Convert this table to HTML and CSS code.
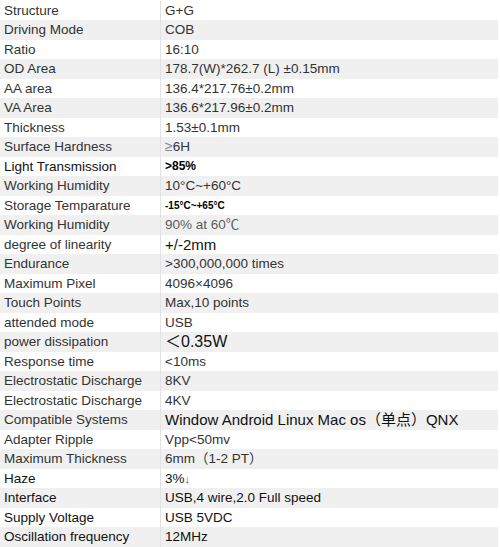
FILE: index.html
```html
<!DOCTYPE html>
<html lang="en">
<head>
<meta charset="utf-8">
<title>Specifications</title>
<link rel="stylesheet" href="styles.css">
</head>
<body>
<div class="spec">
  <div class="row"><div class="k">Structure</div><div class="v">G+G</div></div>
  <div class="row"><div class="k">Driving Mode</div><div class="v">COB</div></div>
  <div class="row"><div class="k">Ratio</div><div class="v">16:10</div></div>
  <div class="row"><div class="k">OD Area</div><div class="v">178.7(W)*262.7 (L) ±0.15mm</div></div>
  <div class="row"><div class="k">AA area</div><div class="v">136.4*217.76±0.2mm</div></div>
  <div class="row"><div class="k">VA Area</div><div class="v">136.6*217.96±0.2mm</div></div>
  <div class="row"><div class="k">Thickness</div><div class="v">1.53±0.1mm</div></div>
  <div class="row"><div class="k">Surface Hardness</div><div class="v"><span class="ge">≥</span>6H</div></div>
  <div class="row"><div class="k dark">Light Transmission</div><div class="v bold">&gt;85%</div></div>
  <div class="row"><div class="k">Working Humidity</div><div class="v">10°C~+60°C</div></div>
  <div class="row"><div class="k">Storage Temparature</div><div class="v tiny">-15°C~+65°C</div></div>
  <div class="row"><div class="k">Working Humidity</div><div class="v light">90% at 60℃</div></div>
  <div class="row"><div class="k">degree of linearity</div><div class="v big">+/-2mm</div></div>
  <div class="row"><div class="k">Endurance</div><div class="v">&gt;300,000,000 times</div></div>
  <div class="row"><div class="k">Maximum Pixel</div><div class="v">4096×4096</div></div>
  <div class="row"><div class="k">Touch Points</div><div class="v">Max,10 points</div></div>
  <div class="row"><div class="k">attended mode</div><div class="v">USB</div></div>
  <div class="row"><div class="k">power dissipation</div><div class="v bigger">＜0.35W</div></div>
  <div class="row"><div class="k">Response time</div><div class="v">&lt;10ms</div></div>
  <div class="row"><div class="k">Electrostatic Discharge</div><div class="v">8KV</div></div>
  <div class="row"><div class="k">Electrostatic Discharge</div><div class="v">4KV</div></div>
  <div class="row"><div class="k">Compatible Systems</div><div class="v big">Window Android Linux Mac os（单点）QNX</div></div>
  <div class="row"><div class="k">Adapter Ripple</div><div class="v">Vpp&lt;50mv</div></div>
  <div class="row"><div class="k">Maximum Thickness</div><div class="v">6mm（1-2 PT）</div></div>
  <div class="row"><div class="k dark">Haze</div><div class="v dark">3%<span class="arrow">↓</span></div></div>
  <div class="row"><div class="k dark">Interface</div><div class="v dark">USB,4 wire,2.0 Full speed</div></div>
  <div class="row"><div class="k dark">Supply Voltage</div><div class="v dark">USB 5VDC</div></div>
  <div class="row"><div class="k dark">Oscillation frequency</div><div class="v dark">12MHz</div></div>
  <div class="row tail"><div class="k"></div><div class="v"></div></div>
</div>
</body>
</html>
```
FILE: styles.css
```css
html, body {
  margin: 0;
  padding: 0;
  background: #ffffff;
}
body {
  width: 500px;
  height: 547px;
  overflow: hidden;
  font-family: "Liberation Sans", Arial, "Noto Sans CJK SC", sans-serif;
  font-size: 13.5px;
  color: #333333;
}
.spec {
  width: 498px;
  display: flex;
  flex-direction: column;
  padding-top: 0.5px;
}
.row {
  display: grid;
  grid-template-columns: 160px 1fr;
  height: 19.5px;
  align-items: center;
}
.row:nth-child(even) {
  background: #f0f0f0;
}
.row.tail {
  height: 8px;
  background: #ffffff;
}
.k {
  padding-left: 4px;
  white-space: nowrap;
  line-height: 19.5px;
}
.v {
  padding-left: 4px;
  border-left: 1px solid #e2e2e2;
  white-space: nowrap;
  line-height: 19.5px;
  height: 100%;
}
.dark { color: #111111; }
.bold { font-weight: bold; font-size: 12px; color: #000; }
.tiny { font-weight: bold; font-size: 10px; color: #000; }
.light { color: #5c5c5c; }
.big { font-size: 15px; color: #111; }
.bigger { font-size: 16px; color: #111; }
.ge { color: #888888; font-size: 14px; }
.arrow { font-size: 11px; color: #555; }
```
